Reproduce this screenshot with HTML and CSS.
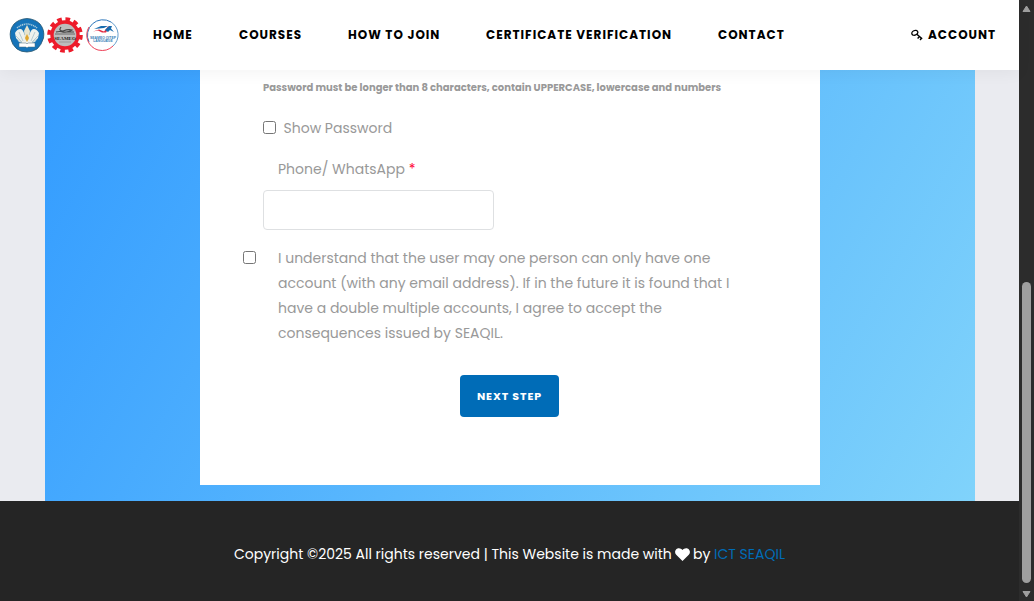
FILE: index.html
```html
<!DOCTYPE html>
<html lang="en">
<head>
<meta charset="utf-8">
<title>Register</title>
<link rel="stylesheet" href="styles.css">
</head>
<body>
<div class="page">
  <header class="header">
    <div class="logos">
      <svg class="logo" viewBox="0 0 36 36" width="36" height="36">
        <path d="M18 1.500Q26 2 31 7q5 6 3.500 14-2 7-6.500 11-5 3-10 3-6 0-10-3-5-4-6.500-11Q0 13 5 7q5-5 13-5.500z" fill="#1674b9" stroke="#27566f" stroke-width=".8"/>
        <path d="M8 11Q18 3 28 11" fill="none" stroke="#a9cbdc" stroke-width="1.600" stroke-dasharray="1.2 .7"/>
        <path d="M15.500 18C14 10 9 11 6 16l1 5 3 4 3 1 2 3h6l2-3 3-1 3-4 1-5c-3-5-8-6-9.500 2z" fill="#eef1ed"/>
        <path d="m6 18 7 7M8 22l5 4M10 15l4 9M30 18l-7 7M28 22l-5 4M26 15l-4 9" stroke="#8eb0bd" stroke-width=".6"/>
        <path d="m18 8-3 6 1 9h4l1-9z" fill="#e7e4cf"/><path d="m18 17-2 4 2 4 2-4z" fill="#dfa62f"/>
        <path d="M10 26h7l1 1 1-1h7v4h-7l-1 1-1-1h-7z" fill="#fff" stroke="#496b78" stroke-width=".5"/>
      </svg>
      <svg class="logo" viewBox="0 0 36 36" width="36" height="36">
        <circle cx="18" cy="18" r="15.8" fill="none" stroke="#ed1c2b" stroke-width="4" stroke-dasharray="4.600 3.670"/>
        <circle cx="18" cy="18" r="13" fill="#bdbdbd" stroke="#ed1c2b" stroke-width="3.4"/>
        <path d="M9 15q4-1 7 0h11M14 10q-3 4 2 4 5-2 9-1-4 3-10 2" fill="none" stroke="#444" stroke-width="1.2"/>
        <path d="M8 17h20" stroke="#555" stroke-width=".8"/>
        <text x="18" y="22.5" class="seameo">SEAMEO</text>
        <path d="M12 25h12" stroke="#999"/>
      </svg>
      <svg class="logo" viewBox="0 0 36 36" width="36" height="36">
        <path d="M4 25A15.500 15.500 0 0 1 26 5" fill="none" stroke="#2c76bb"/>
        <path d="M26 5a15 15 0 0 1 2 24" fill="none" stroke="#4085bf" stroke-width=".8"/>
        <path d="M4 10a15.500 15.500 0 0 0 9 23q9 2 15-4" fill="none" stroke="#ee4057"/>
        <path d="m9 12 7-3 7 0-4 2-5 .5z" fill="#186cae"/><path d="m8 14.500 6-2 5 2 4-5 2 0-4 6h-4l-4-2z" fill="#e32f44"/><path d="m20 13 4-4 3 0-1 2.500 3 3.500-4-2-2 2z" fill="#186cae"/>
        <text x="18" y="21.500" class="qitep">SEAMEO QITEP</text><text x="18" y="25" class="qitep">LANGUAGE</text>
      </svg>
    </div>
    <nav class="nav">
      <a class="home">HOME</a><a class="courses">COURSES</a><a class="join">HOW TO JOIN</a><a class="verify">CERTIFICATE VERIFICATION</a><a class="contact">CONTACT</a>
    </nav>
    <a class="account"><svg width="12" height="12" viewBox="0 0 12 12" fill="none" stroke="#000"><ellipse cx="3.8" cy="3.800" rx="3.100" ry="2.300" transform="rotate(-25 3.800 3.800)" stroke-width="1.3"/><path d="m5.5 5 5.700 4.800M8.300 7.700l-1.700 1.700M10.400 9.300l-1.300 1.700" stroke-width="1.4"/></svg><span>ACCOUNT</span></a>
  </header>
  <main class="section">
    <div class="backdrop">
      <form class="card">
        <small class="hint">Password must be longer than 8 characters, contain UPPERCASE, lowercase and numbers</small>
        <label class="show"><span class="check"></span><span class="show-text">Show Password</span></label>
        <label class="phone-label" for="phone">Phone/ WhatsApp <span class="star">*</span></label>
        <input class="phone" id="phone">
        <label class="agree"><span class="check"></span>
          <span class="agree-text">I understand that the user may one person can only have one account (with any email address). If in the future it is found that I have a double multiple accounts, I agree to accept the consequences issued by SEAQIL.</span></label>
        <button class="next" type="button">NEXT STEP</button>
      </form>
    </div>
  </main>
  <footer class="footer"><span class="copy">Copyright ©2025 All rights reserved | This Website is made with</span><svg class="heart" width="15" height="13" viewBox="0 0 15 13"><path d="M7.5 13 1.2 6.8C-.8 4.6 0 1.3 2.5.4 4.5-.3 6.2.5 7.5 2 8.8.5 10.5-.3 12.5.4c2.5.9 3.3 4.2 1.3 6.4z" fill="#fff"/></svg><span class="by">by</span><a class="ict">ICT SEAQIL</a></footer>
</div>
<div class="scrollbar"><svg width="9" height="8" viewBox="0 0 9 8"><path d="M4.5 1 8 6.5H1z" fill="#9f9f9f" stroke="#9f9f9f" stroke-linejoin="round"/></svg><div class="thumb"></div><svg width="9" height="8" viewBox="0 0 9 8"><path d="M4.5 7 8 1.5H1z" fill="#9f9f9f" stroke="#9f9f9f" stroke-linejoin="round"/></svg></div>
</body>
</html>
```
FILE: styles.css
```css
* { box-sizing: border-box; }
body { margin: 0; display: flex; width: 1034px; height: 601px; overflow: hidden; font-family: Poppins, Inter, sans-serif; font-size: 14px; color: #999; }
span, a, small { white-space: nowrap; }
.page { width: 1019px; display: flex; flex-direction: column; }
.header { position: relative; z-index: 1; height: 70px; background: #fff; display: flex; align-items: center; box-shadow: 0 4px 14px rgba(0,0,0,.045); color: #000; font-size: 12px; font-weight: 700; }
.logos { display: flex; gap: 2px; margin-left: 9px; width: 144px; }
.seameo { font: bold 5px "Liberation Serif", serif; text-anchor: middle; fill: #222; }
.qitep { font: bold 3.4px "Liberation Sans", sans-serif; text-anchor: middle; fill: #367eb8; }
.nav { display: flex; width: 757px; letter-spacing: 1px; }
.home { width: 86px; }
.courses { width: 109px; }
.join { width: 138px; }
.verify { width: 232px; }
.account { display: flex; align-items: center; gap: 5px; margin-left: 1px; letter-spacing: 1px; }
.section { height: 431px; background: #eaebf0; display: flex; justify-content: center; }
.backdrop { width: 930px; background: linear-gradient(120deg, #339cff, #80d3fb); display: flex; justify-content: center; }
.card { width: 620px; height: 415px; background: #fff; padding: 8px 43px 0; display: flex; flex-direction: column; align-items: flex-start; }
.hint { font-size: 10px; font-weight: 700; line-height: 20px; margin-left: 20.5px; }
.check { width: 13px; height: 13px; border: 1px solid #767676; border-radius: 2.5px; background: #fff; flex: none; }
.show { display: flex; align-items: center; gap: 8px; margin: 17px 0 0 20px; line-height: 25px; height: 25px; }
.show-text { padding-top: 2px; }
.phone-label { line-height: 25px; margin: 17px 0 0 35.5px; height: 25px; }
.star { color: #ff0032; }
.phone { width: 231px; height: 40px; border: 1px solid #dee0e2; border-radius: 4px; margin: 8px 0 0 20px; background: #fff; }
.agree { display: flex; gap: 22.5px; margin-top: 16px; line-height: 25px; }
.agree .check { margin-top: 5px; }
.agree-text { width: 465px; white-space: normal; }
.next { font: 700 11px/42px Poppins, Inter, sans-serif; color: #fff; background: #006cb7; border: 0; border-radius: 4px; width: 99px; height: 42px; padding: 0 0 0 1px; margin: 29px 0 0 217px; letter-spacing: .9px; }
.footer { height: 100px; background: #252525; color: #fff; display: flex; align-items: center; padding: 6px 0 0 234px; }
.copy { width: 441px; }
.by { margin-left: 3px; width: 21px; }
.ict { color: #006cb7; }
.scrollbar { width: 15px; background: #2c2c2c; display: flex; flex-direction: column; align-items: center; justify-content: space-between; padding: 5px 0 3px; }
.thumb { width: 9px; height: 301px; margin-top: 263px; margin-bottom: 1px; background: #9f9f9f; border-radius: 5px; }
```
